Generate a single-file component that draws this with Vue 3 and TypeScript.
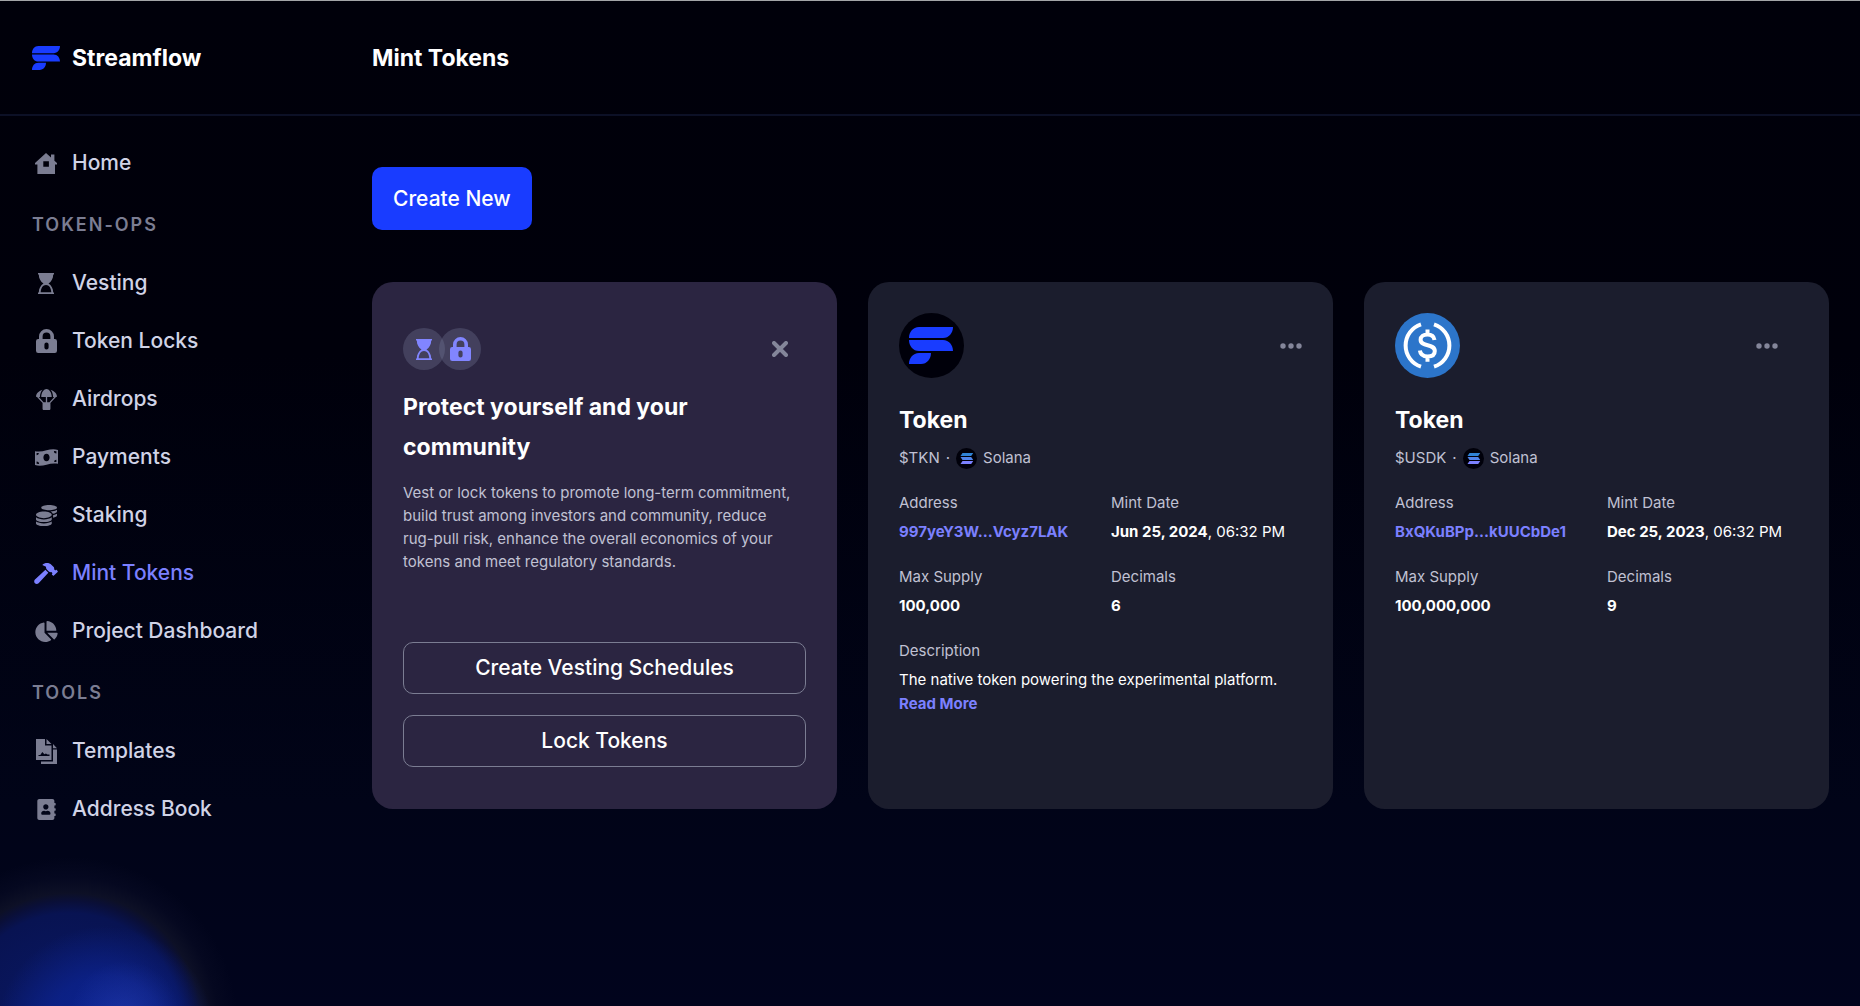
<script setup lang="ts">
interface NavItem {
  label: string
  icon: string
  active?: boolean
}

interface NavGroup {
  title?: string
  items: NavItem[]
}

interface Token {
  logo: 'streamflow' | 'usd'
  name: string
  symbol: string
  address: string
  date: string
  time: string
  supply: string
  decimals: number
  description?: string
}

interface Icon {
  box: string
  width: number
  height: number
  path: string
}

const icons: Record<string, Icon> = {
  home: {
    box: '0 0 22 21', width: 22, height: 21,
    path: 'M11 0 16 4.6V1.5h3.4v6.2L22 10v1.6h-2V21H2.4v-9.400H0V10ZM8.300 8.200v5.600h5.600V8.200Z',
  },
  hourglass: {
    box: '0 0 16 21', width: 16, height: 21,
    path: 'M0 0h16v1.500h-.8c0 4.200-1.900 7.100-4.700 9 2.800 1.900 4.700 4.800 4.700 9h.8V21H0v-1.500h.8c0-4.200 1.900-7.100 4.700-9-2.800-1.900-4.700-4.800-4.700-9H0ZM2.700 19.300h10.600c-.2-4.200-2-7.300-5.300-7.300s-5.100 3.100-5.300 7.300Z',
  },
  lock: {
    box: '0 0 21 24', width: 21, height: 24,
    path: 'M3 10V7.500a7.500 7.500 0 0 1 15 0V10h.8A2.200 2.200 0 0 1 21 12.200v9.600a2.200 2.200 0 0 1-2.200 2.200H2.200A2.200 2.200 0 0 1 0 21.800v-9.600A2.200 2.200 0 0 1 2.200 10ZM6.600 10h7.800V7.500a3.900 3.900 0 0 0-7.800 0ZM8.400 15.500v3a2.100 2.100 0 0 0 4.200 0v-3a2.100 2.100 0 0 0-4.200 0Z',
  },
  parachute: {
    box: '0 0 512 512', width: 21, height: 21,
    path: 'M511.9 175c-9.1-75.6-78.4-132.4-158.3-158.7C390 55.7 416 116.9 416 192h28.1L327.5 321.5c-2.5-.6-4.800-1.500-7.500-1.500h-48V192h112C384 76.800 315.100 0 256 0S128 76.800 128 192h112v128h-48c-2.700 0-5 .9-7.500 1.500L67.900 192H96c0-75.100 26-136.300 62.400-175.700C78.500 42.700 9.200 99.500.1 175c-1.100 9.100 6.800 17 16 17h8.700l136.700 151.900c-.7 2.600-1.600 5.200-1.600 8.100v128c0 17.700 14.300 32 32 32h128c17.700 0 32-14.300 32-32V352c0-2.900-.9-5.400-1.600-8.100L487.100 192h8.700c9.300 0 17.200-7.800 16.100-17z',
  },
  bill: {
    box: '0 0 23 17', width: 23, height: 17,
    path: 'M0 2.200C3.800 3 7.700 2.400 11.500 1.300S19.200-.3 23 .9v13.900c-3.800-.8-7.700-.2-11.500.9s-7.700 1.600-11.500.4ZM11.500 4.800c-1.800 0-3.100 1.600-3.100 3.700s1.300 3.700 3.100 3.700 3.100-1.600 3.100-3.700-1.300-3.700-3.100-3.700ZM1.600 4v2.200A2.200 2.200 0 0 0 3.900 4.100ZM1.600 12.600v2.200l2.500.3a2.500 2.500 0 0 0-2.500-2.500ZM21.400 13v-2.200a2.200 2.200 0 0 0-2.300 2.100ZM21.400 4.400V2.200l-2.500-.3a2.500 2.500 0 0 0 2.500 2.500Z',
  },
  coins: {
    box: '0 0 512 512', width: 21, height: 21,
    path: 'M0 405.300V448c0 35.300 86 64 192 64s192-28.700 192-64v-42.700C342.700 434.400 267.200 448 192 448S41.300 434.400 0 405.300zM320 128c106 0 192-28.700 192-64S426 0 320 0 128 28.700 128 64s86 64 192 64zM0 300.400V352c0 35.300 86 64 192 64s192-28.700 192-64v-51.600c-41.300 34-116.900 51.600-192 51.600S41.300 334.400 0 300.400zm416 11c57.300-11.100 96-31.700 96-55.400v-42.700c-23.200 16.400-57.300 27.600-96 34.500v63.600zM192 160C86 160 0 195.800 0 240s86 80 192 80 192-35.800 192-80-86-80-192-80zm219.300 56.300c60-10.800 100.700-32 100.700-56.300v-42.700c-35.500 25.100-96.500 38.600-160.700 41.800 29.500 14.300 51.200 33.500 60 57.200z',
  },
  hammer: {
    box: '0 0 576 512', width: 24, height: 21,
    path: 'M571.310 193.940l-22.630-22.630c-6.250-6.250-16.380-6.250-22.630 0l-11.310 11.310-28.900-28.900c5.630-21.310.36-44.900-16.350-61.610l-45.250-45.250c-62.480-62.480-163.790-62.480-226.280 0l90.510 45.250v18.750c0 16.970 6.740 33.250 18.750 45.250l49.140 49.140c16.710 16.710 40.300 21.980 61.610 16.350l28.900 28.900-11.310 11.310c-6.250 6.250-6.250 16.380 0 22.630l22.630 22.630c6.250 6.250 16.380 6.250 22.630 0l90.510-90.510c6.230-6.240 6.230-16.370-.02-22.620zm-286.720-15.200c-3.700-3.700-6.840-7.790-9.850-11.950L19.640 404.960c-25.570 23.880-26.260 64.190-1.530 88.930s65.050 24.050 88.920-1.530l238.130-255.070c-3.960-2.910-7.900-5.870-11.440-9.410l-49.130-49.140z',
  },
  pie: {
    box: '0 0 544 512', width: 23, height: 21,
    path: 'M527.790 288H290.500l158.030 158.030c6.040 6.040 15.980 6.530 22.190.68 38.700-36.460 65.320-85.610 73.130-140.860 1.340-9.460-6.510-17.850-16.060-17.850zm-15.830-64.800C503.720 103.740 408.260 8.280 288.800.04 279.680-.59 272 7.100 272 16.240V240h223.770c9.140 0 16.820-7.680 16.190-16.800zM224 288V50.710c0-9.550-8.390-17.400-17.840-16.060C86.990 51.490-4.100 155.600.14 280.370 4.500 408.510 114.830 513.590 243.030 511.980c50.400-.63 96.970-16.870 135.260-44.030 7.900-5.600 8.420-17.230 1.570-24.080L224 288z',
  },
  template: {
    box: '0 0 21 25', width: 21, height: 25,
    path: 'M0 0h9v6.500h6.500V21H0ZM10.500 0l5 5h-5ZM17 5l4 4.200h-4ZM17 10.500h4V25H5v-2.500h12ZM2.500 17h11v-1.500h-2l-1.600-1-1.500.8-2.100-2.300-2 2.900H2.500Z',
  },
  contact: {
    box: '0 0 448 512', width: 19, height: 21,
    path: 'M436 160c6.600 0 12-5.400 12-12v-40c0-6.600-5.400-12-12-12h-20V48c0-26.500-21.500-48-48-48H48C21.500 0 0 21.500 0 48v416c0 26.500 21.500 48 48 48h320c26.500 0 48-21.500 48-48v-48h20c6.600 0 12-5.400 12-12v-40c0-6.600-5.400-12-12-12h-20v-64h20c6.600 0 12-5.400 12-12v-40c0-6.600-5.400-12-12-12h-20v-64h20zm-228-32c35.300 0 64 28.700 64 64s-28.700 64-64 64-64-28.700-64-64 28.700-64 64-64zm112 236.800c0 10.600-10 19.200-22.400 19.200H118.400C106 384 96 375.400 96 364.800v-19.200c0-31.800 30.100-57.600 67.200-57.600h5c12.300 5.100 25.700 8 39.800 8s27.600-2.900 39.800-8h5c37.100 0 67.200 25.800 67.200 57.600v19.200z',
  },
}

const groups: NavGroup[] = [
  { items: [{ label: 'Home', icon: 'home' }] },
  {
    title: 'TOKEN-OPS',
    items: [
      { label: 'Vesting', icon: 'hourglass' },
      { label: 'Token Locks', icon: 'lock' },
      { label: 'Airdrops', icon: 'parachute' },
      { label: 'Payments', icon: 'bill' },
      { label: 'Staking', icon: 'coins' },
      { label: 'Mint Tokens', icon: 'hammer', active: true },
      { label: 'Project Dashboard', icon: 'pie' },
    ],
  },
  {
    title: 'TOOLS',
    items: [
      { label: 'Templates', icon: 'template' },
      { label: 'Address Book', icon: 'contact' },
    ],
  },
]

const tokens: Token[] = [
  {
    logo: 'streamflow', name: 'Token', symbol: '$TKN', address: '997yeY3W...Vcyz7LAK',
    date: 'Jun 25, 2024', time: '06:32 PM', supply: '100,000', decimals: 6,
    description: 'The native token powering the experimental platform.',
  },
  {
    logo: 'usd', name: 'Token', symbol: '$USDK', address: 'BxQKuBPp...kUUCbDe1',
    date: 'Dec 25, 2023', time: '06:32 PM', supply: '100,000,000', decimals: 9,
  },
]

const brandMark =
  'M10 0H44C44 6 40 11 34 11H0C0 5 4 0 10 0ZM0 13H34C40 13 44 18 44 24H10C4 24 0 19 0 13ZM10 26H22C22 32 18 37 12 37H0C0 31 4 26 10 26Z'
</script>

<template>
  <div class="app">
    <header class="topbar">
      <a class="brand" href="#">
        <svg class="brand-mark" viewBox="0 0 44 37" preserveAspectRatio="none" aria-hidden="true">
          <path :d="brandMark" fill="#193cff" />
        </svg>
        <span>Streamflow</span>
      </a>
      <h1 class="page-title">Mint Tokens</h1>
    </header>

    <div class="body">
      <nav class="sidebar" aria-label="Main">
        <section v-for="(group, index) in groups" :key="index" class="group">
          <h2 v-if="group.title" class="group-title">{{ group.title }}</h2>
          <a
            v-for="item in group.items"
            :key="item.label"
            href="#"
            class="nav-link"
            :class="{ active: item.active }"
          >
            <span class="nav-icon">
              <svg
                :viewBox="icons[item.icon].box"
                :width="icons[item.icon].width"
                :height="icons[item.icon].height"
                aria-hidden="true"
              >
                <path :d="icons[item.icon].path" fill="currentColor" fill-rule="evenodd" />
              </svg>
            </span>
            <span>{{ item.label }}</span>
          </a>
        </section>
      </nav>

      <main class="content">
        <button class="create" type="button">Create New</button>

        <div class="cards">
          <article class="card promo">
            <div class="promo-head">
              <div class="badges">
                <span v-for="name in ['hourglass', 'lock']" :key="name" class="badge">
                  <svg
                    :viewBox="icons[name].box"
                    :width="icons[name].width"
                    :height="icons[name].height"
                    aria-hidden="true"
                  >
                    <path :d="icons[name].path" fill="currentColor" fill-rule="evenodd" />
                  </svg>
                </span>
              </div>
              <button class="icon-button" type="button" aria-label="Close">
                <svg width="16" height="16" viewBox="0 0 16 16" aria-hidden="true">
                  <path d="M2 2 14 14M14 2 2 14" stroke="currentColor" stroke-width="4" stroke-linecap="round" />
                </svg>
              </button>
            </div>
            <h3 class="promo-title">Protect yourself and your community</h3>
            <p class="promo-text">
              Vest or lock tokens to promote long-term commitment, build trust among investors and
              community, reduce rug-pull risk, enhance the overall economics of your tokens and meet
              regulatory standards.
            </p>
            <div class="promo-actions">
              <button class="outline" type="button">Create Vesting Schedules</button>
              <button class="outline" type="button">Lock Tokens</button>
            </div>
          </article>

          <article v-for="token in tokens" :key="token.symbol" class="card">
            <div class="token-head" :class="token.logo">
              <svg v-if="token.logo === 'streamflow'" width="65" height="65" viewBox="0 0 65 65" aria-hidden="true">
                <circle cx="32.5" cy="32.5" r="32.5" fill="#00000a" />
                <path :d="brandMark" transform="translate(10 14)" fill="#193cff" />
              </svg>
              <svg v-else width="65" height="65" viewBox="0 0 65 65" fill="none" aria-hidden="true">
                <circle cx="32.5" cy="32.5" r="32.5" fill="#2c75ca" />
                <g stroke="#fff" stroke-width="4">
                  <path d="M26 11.300a22.300 22.300 0 0 0 0 42.400M39 11.300a22.300 22.300 0 0 1 0 42.400" />
                  <path d="M39.500 27c-.6-3.600-3-5.400-7-5.400s-6.900 1.800-6.900 5.200c0 7.600 14.200 3.400 14.200 11.200 0 3.600-2.700 5.500-7.200 5.500s-7.200-2-7.700-5.900M32.500 16.500v5M32.500 43.500v5.300" />
                </g>
              </svg>
              <button class="icon-button" type="button" aria-label="Token options">
                <svg width="22" height="6" viewBox="0 0 22 6" fill="currentColor" aria-hidden="true">
                  <circle cx="3" cy="3" r="2.700" />
                  <circle cx="11" cy="3" r="2.700" />
                  <circle cx="19" cy="3" r="2.700" />
                </svg>
              </button>
            </div>
            <h3 class="token-name">{{ token.name }}</h3>
            <p class="token-meta">
              <span>{{ token.symbol }}</span>
              <span>·</span>
              <span class="chain">
                <svg width="21" height="21" viewBox="0 0 21 21" aria-hidden="true">
                  <circle cx="10.500" cy="10.500" r="10.500" fill="#00000a" />
                  <path d="M6.500 5h10.700l-2 3H4.500Z" fill="#2f83d6" />
                  <path d="M4.500 9h10.700l2 3H6.500Z" fill="#4f83ea" />
                  <path d="M6.500 13h10.700l-2 3H4.500Z" fill="#7b80ff" />
                </svg>
                Solana
              </span>
            </p>
            <dl class="facts">
              <div>
                <dt>Address</dt>
                <dd><a href="#">{{ token.address }}</a></dd>
              </div>
              <div>
                <dt>Mint Date</dt>
                <dd><b>{{ token.date }}</b>, {{ token.time }}</dd>
              </div>
              <div>
                <dt>Max Supply</dt>
                <dd><b>{{ token.supply }}</b></dd>
              </div>
              <div>
                <dt>Decimals</dt>
                <dd><b>{{ token.decimals }}</b></dd>
              </div>
              <div v-if="token.description" class="wide">
                <dt>Description</dt>
                <dd>{{ token.description }}<br /><a href="#">Read More</a></dd>
              </div>
            </dl>
          </article>
        </div>
      </main>
    </div>
  </div>
</template>

<style>
body {
  background: #00000a;
}
</style>

<style scoped>
.app {
  box-sizing: border-box;
  min-height: 100vh;
  border-top: 1px solid #a3a5a8;
  background:
    radial-gradient(circle at 125px calc(100% + 10px), rgba(60, 85, 215, 0.3) 0, transparent 55px),
    radial-gradient(circle at 105px calc(100% + 30px), rgba(12, 36, 150, 0.9) 0, rgba(12, 34, 140, 0.8) 60px, transparent 110px),
    radial-gradient(circle at 70px calc(100% + 19px), #0a1968 0, #081352 112px, #0a0f38 124px, #0d1026 132px, #050820 148px, transparent 168px),
    linear-gradient(#00000a 0, #00000b 35%, #010418 80%, #01041d 100%);
  color: #fff;
  font-family: Inter, 'Liberation Sans', sans-serif;
  font-size: 15px;
  font-optical-sizing: none;
  line-height: 24px;
}

h1,
h2,
h3,
p,
dl,
dd {
  margin: 0;
}

a {
  color: inherit;
  text-decoration: none;
}

button {
  font: inherit;
  font-optical-sizing: none;
  color: inherit;
  cursor: pointer;
}

svg {
  display: block;
}

.topbar {
  display: flex;
  align-items: center;
  height: 113px;
  border-bottom: 2px solid #0c1026;
}

.brand {
  display: flex;
  align-items: center;
  gap: 12px;
  box-sizing: border-box;
  width: 372px;
  padding-left: 32px;
  font-size: 23px;
  font-weight: 700;
}

.brand-mark {
  width: 28px;
  height: 24px;
}

.page-title {
  font-size: 23px;
  font-weight: 700;
}

.body {
  display: flex;
}

.sidebar {
  flex: none;
  box-sizing: border-box;
  width: 372px;
  padding: 18px 32px;
}

.group-title {
  margin: 21px 0 17px;
  font-size: 18px;
  font-weight: 600;
  line-height: 24px;
  letter-spacing: 2px;
  color: #7b7d92;
}

.nav-link {
  display: flex;
  align-items: center;
  gap: 12px;
  height: 58px;
  font-size: 21px;
  font-weight: 500;
  color: #d0d3e6;
}

.nav-icon {
  display: flex;
  justify-content: center;
  width: 28px;
  color: #7b7d92;
}

.active,
.active .nav-icon {
  color: #7b80ff;
}

.content {
  flex: 1;
  min-width: 0;
  padding: 51px 31px 51px 0;
}

.create {
  height: 63px;
  padding: 0 21px;
  border: 0;
  border-radius: 10px;
  background: #193cff;
  font-size: 21px;
  font-weight: 500;
}

.cards {
  display: grid;
  grid-template-columns: repeat(3, minmax(0, 1fr));
  gap: 31px;
  margin-top: 52px;
}

.card {
  box-sizing: border-box;
  min-height: 527px;
  padding: 31px;
  border-radius: 21px;
  background: #1b1d2d;
}

.promo {
  display: flex;
  flex-direction: column;
  padding: 46px 31px 42px;
  background: #2b2541;
}

.promo-head,
.token-head {
  display: flex;
  align-items: center;
  justify-content: space-between;
}

.promo-head {
  padding-right: 18px;
}

.badges {
  display: flex;
}

.badge {
  display: flex;
  align-items: center;
  justify-content: center;
  width: 42px;
  height: 42px;
  border-radius: 50%;
  background: rgba(123, 128, 160, 0.3);
  color: #8185ff;
}

.badge + .badge {
  margin-left: -6px;
}

.icon-button {
  padding: 0;
  border: 0;
  background: none;
  color: #84869a;
}

.promo-title {
  margin-top: 17px;
  font-size: 23px;
  font-weight: 700;
  line-height: 40px;
}

.promo-text {
  margin-top: 14px;
  padding-right: 10px;
  line-height: 23px;
  color: #c0c1d3;
}

.promo-actions {
  display: grid;
  gap: 21px;
  margin-top: auto;
}

.outline {
  height: 52px;
  border: 1px solid #7b7d92;
  border-radius: 10px;
  background: none;
  font-size: 21px;
  font-weight: 500;
}

.token-head.usd {
  padding-right: 20px;
}

.token-name {
  margin-top: 26px;
  font-size: 23px;
  font-weight: 700;
  line-height: 32px;
}

.token-meta {
  display: flex;
  gap: 6px;
  margin-top: 10px;
  color: #c0c1d3;
}

.chain {
  display: flex;
  align-items: center;
  gap: 6px;
}

.facts {
  display: grid;
  grid-template-columns: repeat(2, minmax(0, 1fr));
  gap: 21px;
  margin-top: 21px;
}

.facts dt {
  color: #c0c1d3;
}

.facts dd {
  margin-top: 5px;
}

.facts a {
  font-weight: 700;
  color: #7b80ff;
}

.wide {
  grid-column: 1 / -1;
}
</style>
